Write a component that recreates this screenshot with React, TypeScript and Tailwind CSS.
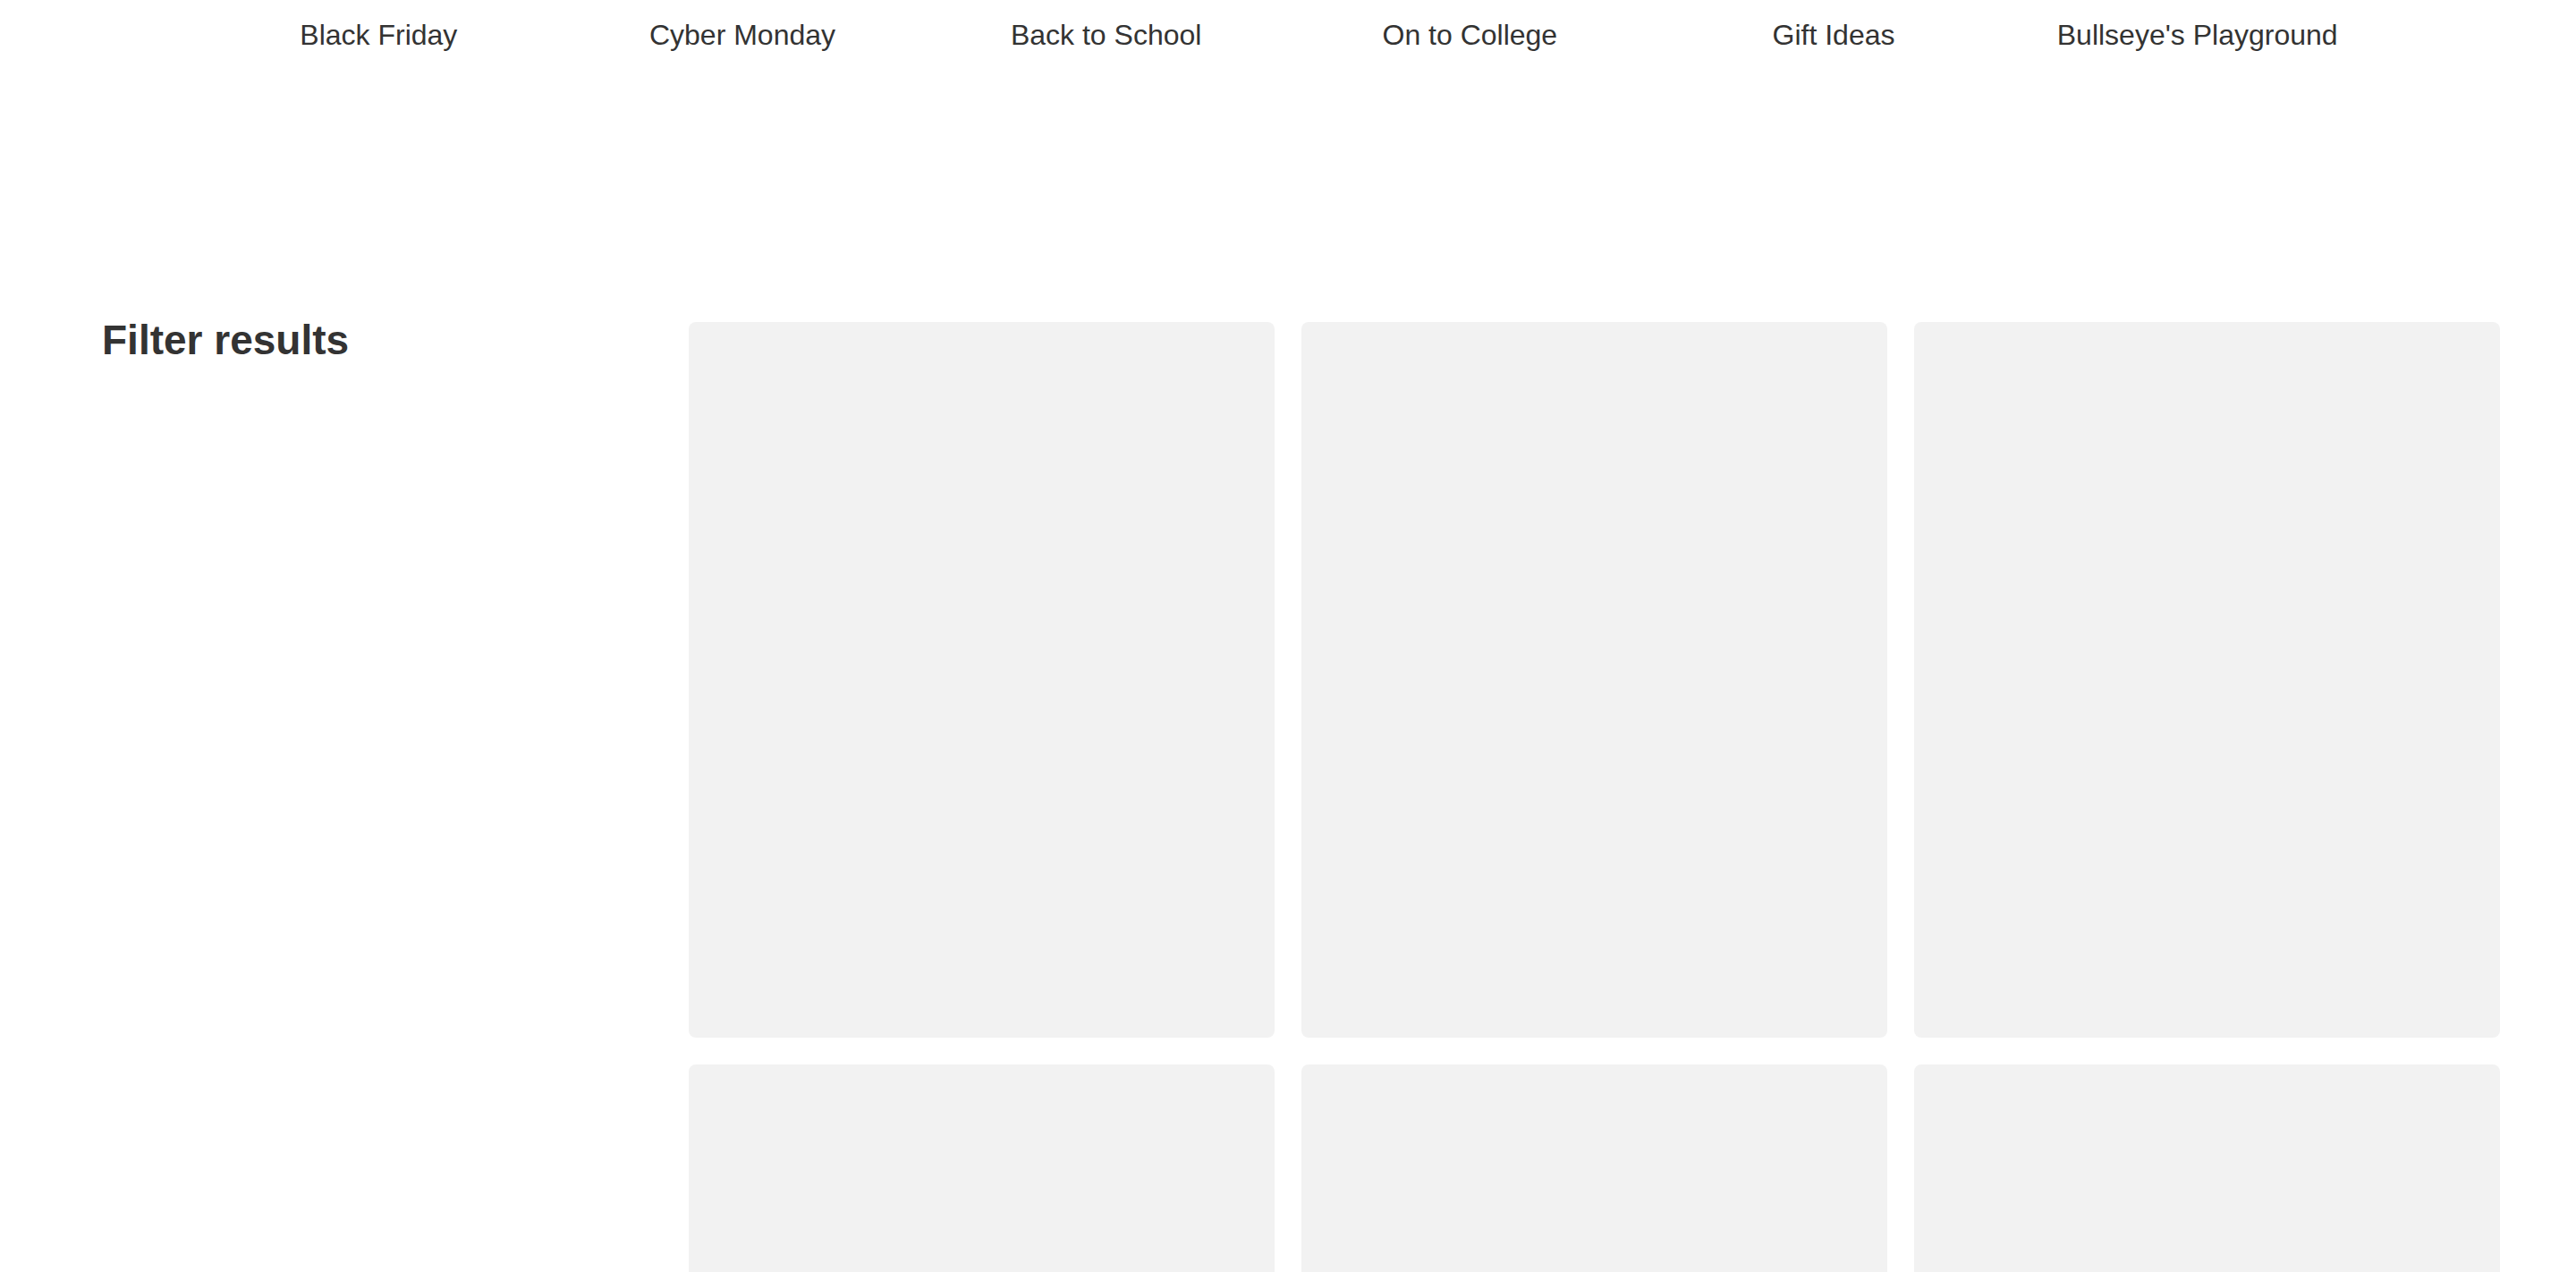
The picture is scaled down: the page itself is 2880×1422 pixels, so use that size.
const navItems = [
  'Black Friday',
  'Cyber Monday',
  'Back to School',
  'On to College',
  'Gift Ideas',
  "Bullseye's Playground",
];

const placeholders = [1, 2, 3, 4, 5, 6];

export default function App() {
  return (
    <div
      className="min-h-screen bg-white text-[#333333]"
      style={{ fontFamily: '"Liberation Sans", Arial, Helvetica, sans-serif' }}
    >
      {/* Top nav */}
      <nav className="mx-auto grid w-[2440px] grid-cols-6 pt-[21px]">
        {navItems.map((item) => (
          <a key={item} href="#" className="text-center text-[32px] leading-[normal] text-[#333333]">
            {item}
          </a>
        ))}
      </nav>

      {/* Content */}
      <div className="mt-[302px] flex gap-[30px] pl-[114px] pr-[85px]">
        <aside className="w-[626px] shrink-0">
          <h2 className="-mt-[3px] text-[46px] font-bold leading-none">Filter results</h2>
        </aside>

        <div className="grid flex-1 grid-cols-3 gap-[30px]">
          {placeholders.map((p) => (
            <div key={p} className="h-[800px] rounded-lg bg-[#f2f2f2]" />
          ))}
        </div>
      </div>
    </div>
  );
}
